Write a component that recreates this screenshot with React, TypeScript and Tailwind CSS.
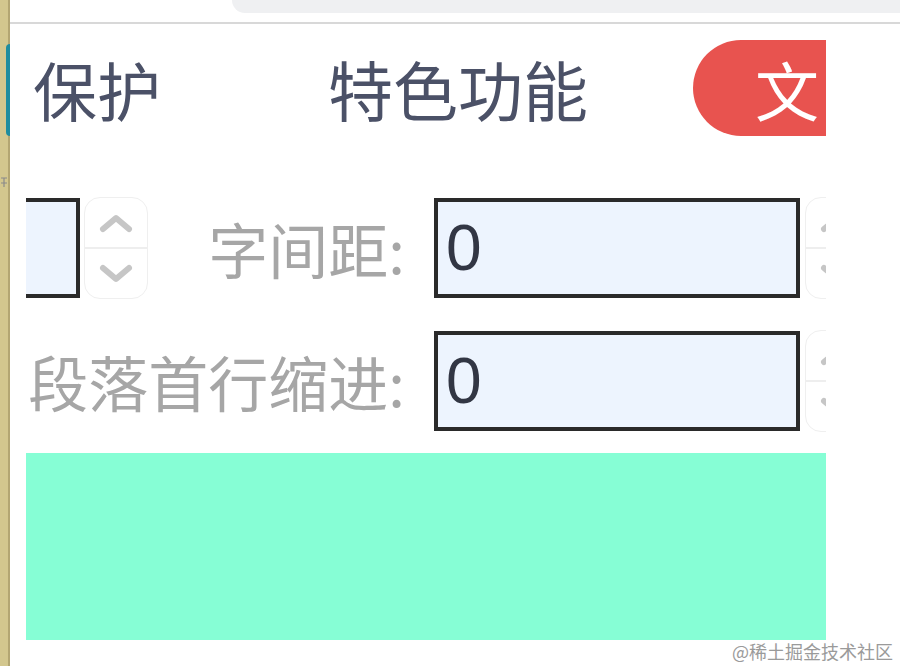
import React from 'react';

const cjk = { fontFamily: '"Noto Sans CJK SC", "Noto Sans", sans-serif' };

function Spinner() {
  return (
    <div className="shrink-0 w-[64px] h-[102px] rounded-[16px] border border-[#efefef] bg-white flex flex-col overflow-hidden">
      <div className="flex-1 flex items-center justify-center border-b-2 border-[#eeeeee]">
        <svg width="34" height="22" viewBox="0 0 34 22" fill="none">
          <path d="M4 17 L17 6 L30 17" stroke="#c6c6c6" strokeWidth="6" strokeLinecap="round" strokeLinejoin="round" />
        </svg>
      </div>
      <div className="flex-1 flex items-center justify-center">
        <svg width="34" height="22" viewBox="0 0 34 22" fill="none">
          <path d="M4 5 L17 16 L30 5" stroke="#c6c6c6" strokeWidth="6" strokeLinecap="round" strokeLinejoin="round" />
        </svg>
      </div>
    </div>
  );
}

function NumberInput({ value }: { value: string }) {
  return (
    <div className="shrink-0 w-[366px] h-[100px] border-4 border-[#2a2a2a] bg-[#edf4fe] flex items-center pl-[8px]">
      <span className="text-[64px] leading-none text-[#323644]" style={{ fontFamily: '"Liberation Sans", Arial, sans-serif' }}>{value}</span>
    </div>
  );
}

export default function App() {
  return (
    <div className="relative w-[900px] h-[666px] bg-white overflow-hidden flex" style={cjk}>
      {/* left window edge */}
      <div className="shrink-0 w-[10px] h-full bg-[#d3c78e] border-r-2 border-[#b3a672] flex flex-col">
        <div className="mt-[44px] ml-[6px] w-[4px] h-[92px] bg-[#1f8d9f] rounded-l-sm" />
        <svg className="mt-[40px]" width="8" height="12" viewBox="0 0 8 12">
          <path d="M1 2 H7 M4 2 V11 M1 7 H7" stroke="#8a8a8a" strokeWidth="1.2" fill="none" />
        </svg>
      </div>

      <div className="flex-1 flex flex-col">
        {/* browser top */}
        <div className="h-[22px] bg-white">
          <div className="ml-[222px] h-[13px] bg-[#eff0f2] rounded-bl-[16px]" />
        </div>
        <div className="h-[2px] bg-[#d8d8d8]" />

        <div className="pl-[16px] pt-[16px]">
          <div className="w-[800px] overflow-hidden">
            {/* tabs */}
            <div className="h-[96px] flex items-center">
              <div className="shrink-0 w-[302px] pl-[7px] text-[64px] leading-none text-[#4b5167]">保护</div>
              <div className="shrink-0 w-[365px] text-[65px] leading-none text-[#4b5167]">特色功能</div>
              <div className="shrink-0 w-[133px] h-[96px] rounded-l-full bg-[#e8534f] flex items-center pl-[62px]">
                <span className="text-[64px] leading-none text-white">文</span>
              </div>
            </div>

            {/* row 1 */}
            <div className="mt-[62px] h-[100px] flex items-center">
              <div className="shrink-0 w-[54px] h-[100px] border-y-4 border-r-4 border-[#2a2a2a] bg-[#edf4fe]" />
              <div className="ml-[4px]"><Spinner /></div>
              <div className="shrink-0 w-[257px] flex justify-end text-[60px] leading-none text-[#a6a6a6] whitespace-nowrap">字间距:</div>
              <div className="ml-[29px]"><NumberInput value="0" /></div>
              <div className="ml-[5px]"><Spinner /></div>
            </div>

            {/* row 2 */}
            <div className="mt-[33px] h-[100px] flex items-center">
              <div className="shrink-0 w-[379px] flex justify-end text-[60px] leading-none text-[#a6a6a6] whitespace-nowrap">段落首行缩进:</div>
              <div className="ml-[29px]"><NumberInput value="0" /></div>
              <div className="ml-[5px]"><Spinner /></div>
            </div>

            <div className="mt-[22px] h-[187px] bg-[#86fed5]" />
          </div>
        </div>
      </div>

      <div className="absolute right-[7px] bottom-[6px] text-[18px] leading-none text-[#9a9a9a]">@稀土掘金技术社区</div>
    </div>
  );
}
